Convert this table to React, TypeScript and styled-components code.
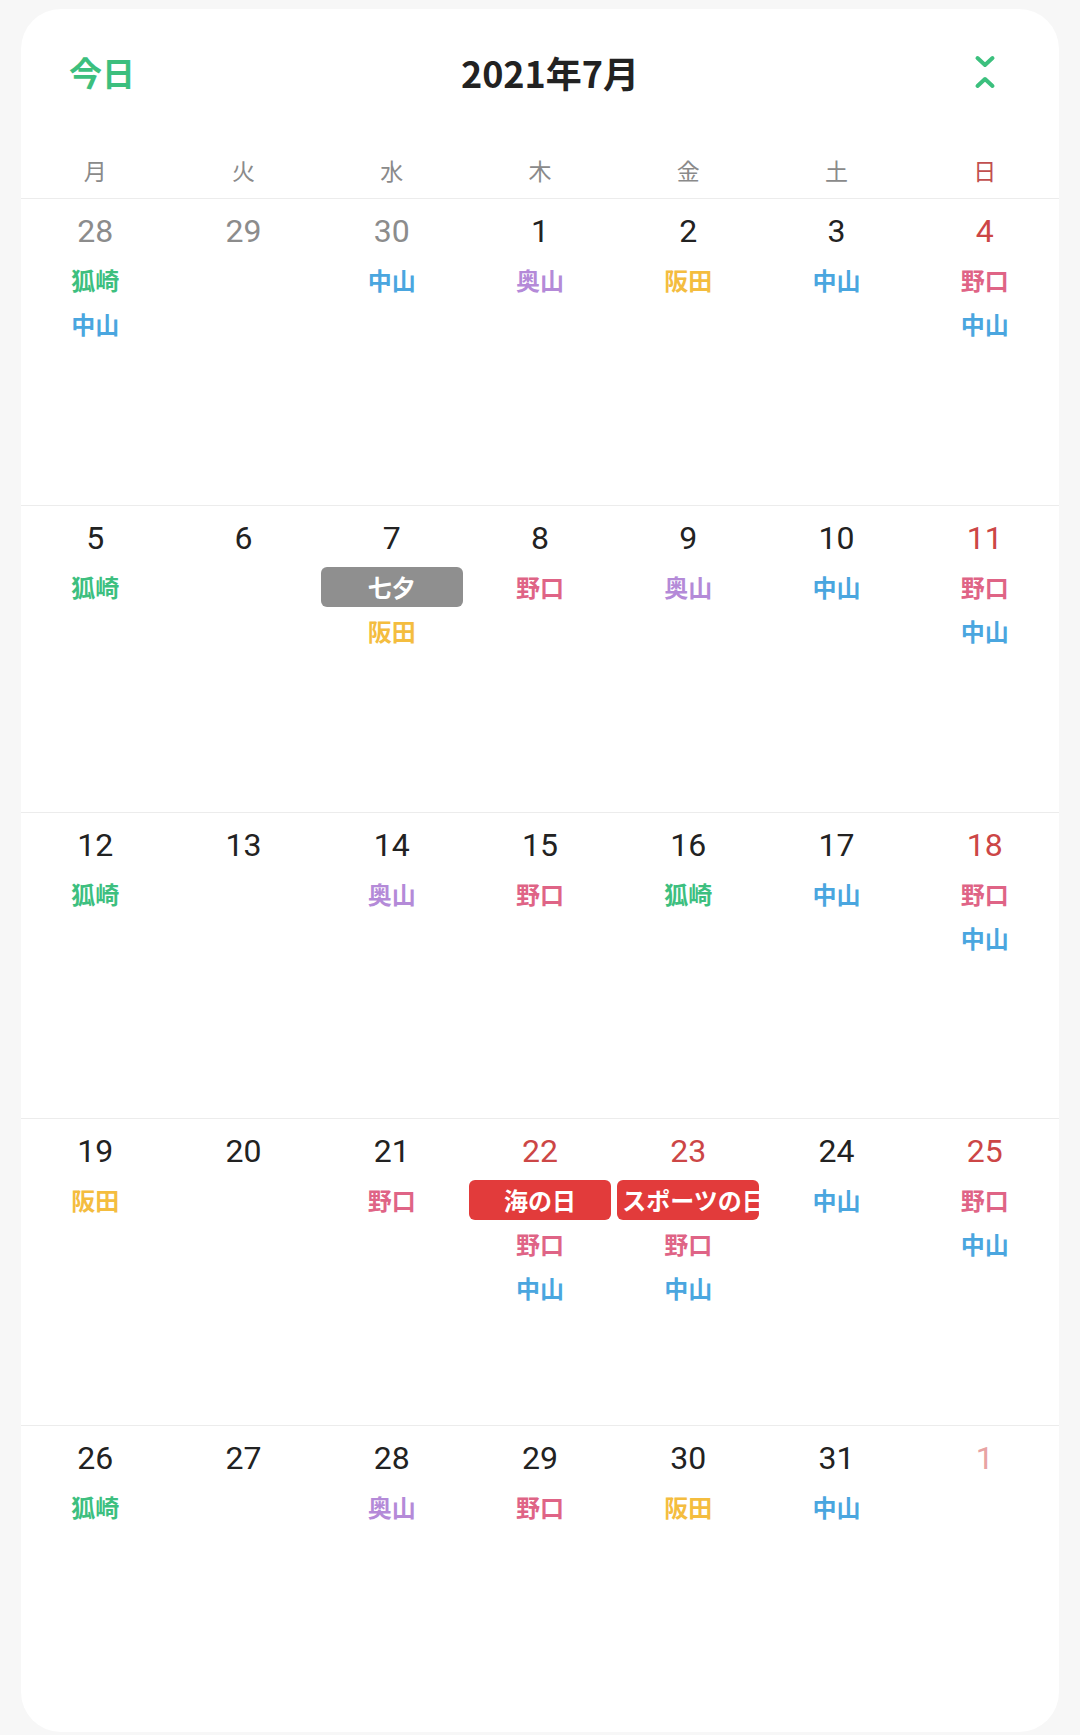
import styled, { createGlobalStyle } from "styled-components";

const GlobalStyle = createGlobalStyle`
  html, body {
    margin: 0;
    padding: 0;
    background: #f7f7f7;
  }
  body {
    font-family: Roboto, "Noto Sans CJK JP", sans-serif;
  }
`;

type Tone = "prev" | "cur" | "next";

interface iDay {
  n: number;
  tone?: Tone;
  holiday?: string;
  holidayRed?: boolean;
  events: string[];
}

const eventColors: Record<string, string> = {
  狐崎: "#3dbf7f",
  中山: "#4aa6df",
  奥山: "#b48ad8",
  阪田: "#f4bd3f",
  野口: "#df6486",
};

const weeks: iDay[][] = [
  [
    { n: 28, tone: "prev", events: ["狐崎", "中山"] },
    { n: 29, tone: "prev", events: [] },
    { n: 30, tone: "prev", events: ["中山"] },
    { n: 1, events: ["奥山"] },
    { n: 2, events: ["阪田"] },
    { n: 3, events: ["中山"] },
    { n: 4, events: ["野口", "中山"] },
  ],
  [
    { n: 5, events: ["狐崎"] },
    { n: 6, events: [] },
    { n: 7, holiday: "七夕", events: ["阪田"] },
    { n: 8, events: ["野口"] },
    { n: 9, events: ["奥山"] },
    { n: 10, events: ["中山"] },
    { n: 11, events: ["野口", "中山"] },
  ],
  [
    { n: 12, events: ["狐崎"] },
    { n: 13, events: [] },
    { n: 14, events: ["奥山"] },
    { n: 15, events: ["野口"] },
    { n: 16, events: ["狐崎"] },
    { n: 17, events: ["中山"] },
    { n: 18, events: ["野口", "中山"] },
  ],
  [
    { n: 19, events: ["阪田"] },
    { n: 20, events: [] },
    { n: 21, events: ["野口"] },
    { n: 22, holiday: "海の日", holidayRed: true, events: ["野口", "中山"] },
    { n: 23, holiday: "スポーツの日", holidayRed: true, events: ["野口", "中山"] },
    { n: 24, events: ["中山"] },
    { n: 25, events: ["野口", "中山"] },
  ],
  [
    { n: 26, events: ["狐崎"] },
    { n: 27, events: [] },
    { n: 28, events: ["奥山"] },
    { n: 29, events: ["野口"] },
    { n: 30, events: ["阪田"] },
    { n: 31, events: ["中山"] },
    { n: 1, tone: "next", events: [] },
  ],
];

const weekdays = ["月", "火", "水", "木", "金", "土", "日"];

const numberColor = (d: iDay, col: number) => {
  if (d.tone === "prev") return "#8c8c8c";
  if (d.tone === "next") return "#e8a3a3";
  if (col === 6 || d.holidayRed) return "#cc4646";
  return "#222222";
};

const CollapseIcon = () => (
  <svg width="22" height="38" viewBox="0 0 22 38" fill="none">
    <path
      d="M3.5 5 L11 12 L18.5 5"
      stroke="#3cc07e"
      strokeWidth="4"
      strokeLinecap="round"
      strokeLinejoin="round"
    />
    <path
      d="M3.5 33 L11 26 L18.5 33"
      stroke="#3cc07e"
      strokeWidth="4"
      strokeLinecap="round"
      strokeLinejoin="round"
    />
  </svg>
);

const App = () => {
  return (
    <>
      <GlobalStyle />
      <Page>
        <Card>
          <TitleBar>
            <TodayButton>今日</TodayButton>
            <MonthTitle>2021年7月</MonthTitle>
            <IconButton>
              <CollapseIcon />
            </IconButton>
          </TitleBar>
          <WeekHeader>
            {weekdays.map((w, i) => (
              <WeekdayCell key={w} $sunday={i === 6}>
                {w}
              </WeekdayCell>
            ))}
          </WeekHeader>
          <Grid>
            {weeks.map((week, wi) => (
              <WeekRow key={wi}>
                {week.map((d, di) => (
                  <DayCell key={di}>
                    <DayNumber $color={numberColor(d, di)}>{d.n}</DayNumber>
                    {d.holiday && (
                      <HolidayBadge $red={!!d.holidayRed}>{d.holiday}</HolidayBadge>
                    )}
                    {d.events.map((e, ei) => (
                      <EventLabel key={ei} $color={eventColors[e]}>
                        {e}
                      </EventLabel>
                    ))}
                  </DayCell>
                ))}
              </WeekRow>
            ))}
          </Grid>
        </Card>
      </Page>
    </>
  );
};
export default App;

const Page = styled.div`
  width: 1080px;
  height: 1735px;
  box-sizing: border-box;
  padding: 9px 21px 3px;
`;

const Card = styled.div`
  width: 1038px;
  height: 1723px;
  background: #ffffff;
  border-radius: 40px;
  overflow: hidden;
  display: flex;
  flex-direction: column;
`;

const TitleBar = styled.div`
  height: 126px;
  flex-shrink: 0;
  display: flex;
  align-items: center;
  justify-content: space-between;
  padding: 0 54px 0 48px;
`;

const TodayButton = styled.div`
  font-family: "Noto Sans CJK JP", sans-serif;
  font-size: 33px;
  font-weight: 700;
  color: #3cbf7e;
  line-height: 44px;
`;

const MonthTitle = styled.div`
  font-family: "Noto Sans CJK JP", sans-serif;
  font-size: 36px;
  font-weight: 700;
  color: #222222;
  line-height: 44px;
`;

const IconButton = styled.div`
  width: 40px;
  height: 40px;
  display: flex;
  align-items: center;
  justify-content: center;
`;

const WeekHeader = styled.div`
  height: 63px;
  flex-shrink: 0;
  box-sizing: border-box;
  display: grid;
  grid-template-columns: repeat(7, 1fr);
  align-items: end;
  padding-bottom: 15px;
`;

const WeekdayCell = styled.div<{ $sunday: boolean }>`
  text-align: center;
  font-family: "Noto Sans CJK JP", sans-serif;
  font-size: 23px;
  line-height: 26px;
  color: ${(p) => (p.$sunday ? "#c14f4f" : "#8a8a8a")};
`;

const Grid = styled.div`
  flex: 1;
  display: grid;
  grid-template-rows: repeat(5, 1fr);
`;

const WeekRow = styled.div`
  display: grid;
  grid-template-columns: repeat(7, 1fr);
  border-top: 1px solid #ececec;
`;

const DayCell = styled.div`
  display: flex;
  flex-direction: column;
  align-items: stretch;
  padding-top: 12px;
  min-width: 0;
`;

const DayNumber = styled.div<{ $color: string }>`
  text-align: center;
  font-family: Roboto, sans-serif;
  font-size: 32px;
  line-height: 40px;
  color: ${(p) => p.$color};
  margin-bottom: 7px;
`;

const EventLabel = styled.div<{ $color: string }>`
  text-align: center;
  font-family: "Noto Sans CJK JP", sans-serif;
  font-size: 24px;
  font-weight: 700;
  line-height: 44px;
  color: ${(p) => p.$color};
`;

const HolidayBadge = styled.div<{ $red: boolean }>`
  margin: 2px 3px;
  height: 40px;
  line-height: 40px;
  padding: 0 5px;
  border-radius: 6px;
  background: ${(p) => (p.$red ? "#e23b3b" : "#8f8f8f")};
  color: #ffffff;
  text-align: center;
  white-space: nowrap;
  overflow: hidden;
  font-family: "Noto Sans CJK JP", sans-serif;
  font-size: 24px;
  font-weight: 700;
`;
